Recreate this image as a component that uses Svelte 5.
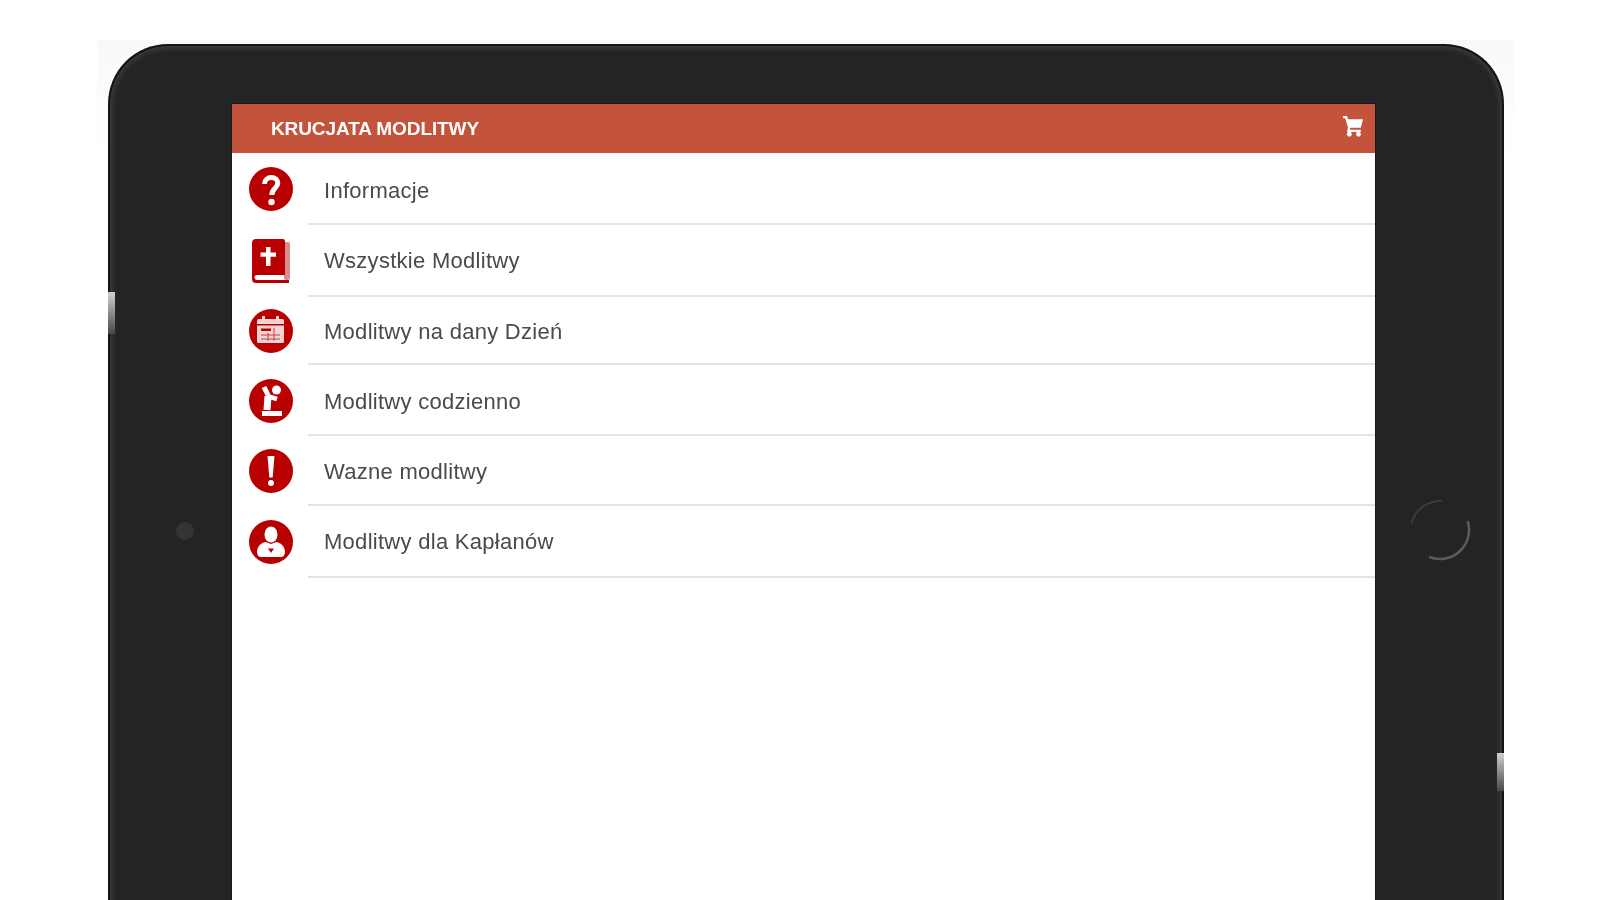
<script>
  const rows = [
    { label: 'Informacje', icon: 'question', height: 72, pad: 6 },
    { label: 'Wszystkie Modlitwy', icon: 'book', height: 72, pad: 1 },
    { label: 'Modlitwy na dany Dzień', icon: 'calendar', height: 68, pad: 3 },
    { label: 'Modlitwy codzienno', icon: 'pray', height: 71, pad: 4 },
    { label: 'Wazne modlitwy', icon: 'alert', height: 70, pad: 4 },
    { label: 'Modlitwy dla Kapłanów', icon: 'priest', height: 72, pad: 2 },
  ];
</script>

<div class="photo">
  <div class="tablet">
    <span class="side-key left"></span>
    <span class="side-key right"></span>

    <div class="bezel-left">
      <span class="camera"></span>
    </div>

    <main class="screen">
      <header class="app-bar">
        <span class="app-title">KRUCJATA MODLITWY</span>
        <svg class="cart" viewBox="0 0 24 24" fill="#fff">
          <path d="M1 1h4.500l1.200 3.500H23l-2.500 9.500H9l-.5 2h12v2.500H5.500l1-5L3.500 3.500H1z"></path>
          <circle cx="8" cy="21" r="2.600"></circle>
          <circle cx="18" cy="21" r="2.600"></circle>
        </svg>
      </header>

      <ul class="menu">
        {#each rows as row}
          <li class="row" style="height: {row.height}px">
            <div class="icon-cell">
              <svg class="icon" viewBox="0 0 44 44">
                {#if row.icon === 'question'}
                  <circle cx="22" cy="22" r="22" fill="#b80000"></circle>
                  <path d="M15.500 17c0-4 3-6.500 6.800-6.500 3.800 0 6.500 2.300 6.500 5.600 0 5-6 5-6 12" fill="none" stroke="#fff" stroke-width="5"></path>
                  <circle cx="22.500" cy="35" r="3.200" fill="#fff"></circle>
                {:else if row.icon === 'book'}
                  <rect x="35" y="3" width="6" height="38" rx="2" fill="#d68f8f"></rect>
                  <path d="M3 4a4 4 0 0 1 4-4h27a2 2 0 0 1 2 2v34H8a2.500 2.500 0 0 0 0 5h32v3H7a4 4 0 0 1-4-4z" fill="#b80000"></path>
                  <path d="M17 8h4.500v5.500H27v4.200h-5.500V27H17v-9.300h-5.500v-4.200H17z" fill="#fff"></path>
                {:else if row.icon === 'calendar'}
                  <circle cx="22" cy="22" r="22" fill="#b80000"></circle>
                  <rect x="8" y="10" width="27" height="24" rx="1.500" fill="#f3d3d3"></rect>
                  <rect x="13" y="7" width="3" height="7" fill="#f3d3d3"></rect>
                  <rect x="27" y="7" width="3" height="7" fill="#f3d3d3"></rect>
                  <rect x="8" y="15" width="27" height="1.500" fill="#b80000"></rect>
                  <rect x="12" y="19.500" width="10" height="2.500" fill="#b80000"></rect>
                  <path d="M12 26h19M12 30h19M19 24v8M25 19v13" stroke="#c84040" stroke-width="1" fill="none"></path>
                {:else if row.icon === 'pray'}
                  <circle cx="22" cy="22" r="22" fill="#b80000"></circle>
                  <circle cx="27.500" cy="11" r="4.500" fill="#fff"></circle>
                  <path d="M15 8l4 8" fill="none" stroke="#fff" stroke-width="5"></path>
                  <path d="M18 17l10 3" fill="none" stroke="#fff" stroke-width="4.500"></path>
                  <path d="M19 17l-1 14" fill="none" stroke="#fff" stroke-width="7"></path>
                  <path d="M13 34.500h20" fill="none" stroke="#fff" stroke-width="5"></path>
                {:else if row.icon === 'alert'}
                  <circle cx="22" cy="22" r="22" fill="#b80000"></circle>
                  <path d="M18.500 7h7l-1.800 21.500h-3.400z" fill="#fff"></path>
                  <circle cx="22" cy="34" r="3" fill="#fff"></circle>
                {:else}
                  <circle cx="22" cy="22" r="22" fill="#b80000"></circle>
                  <ellipse cx="22" cy="14.500" rx="6.500" ry="8" fill="#fff"></ellipse>
                  <path d="M8 32c0-5 3.500-9 8.500-10l5.500 2 5.500-2c5 1 8.500 5 8.500 10 0 3-2 5-4 5H12c-2 0-4-2-4-5z" fill="#fff"></path>
                  <path d="M19 28.500h6L22 33z" fill="#b80000"></path>
                {/if}
              </svg>
            </div>
            <div class="row-body" style="padding-top: {row.pad}px">
              <span class="row-label">{row.label}</span>
            </div>
          </li>
        {/each}
      </ul>
    </main>

    <div class="bezel-right">
      <svg class="home-button" viewBox="0 0 62 62" fill="none">
        <path d="M2.700 24.500A29 29 0 0 1 32.500 2" stroke="#3c3c3c" stroke-width="2"></path>
        <path d="M58.600 22A29 29 0 0 1 20.100 57.900" stroke="#5c5c5c" stroke-width="2.500"></path>
      </svg>
    </div>
  </div>
</div>

<style>
  :global(body) {
    background: #fff;
    overflow: hidden;
  }

  .photo {
    width: 1417px;
    height: 860px;
    margin: 40px 0 0 97px;
    padding: 4px 10px 0 11px;
    box-sizing: border-box;
    background: linear-gradient(#f9f9f9, #fff 120px);
  }

  .tablet {
    position: relative;
    display: flex;
    height: 900px;
    box-sizing: border-box;
    padding-top: 58px;
    background: #242424;
    border: 2px solid #141414;
    border-bottom: none;
    border-radius: 60px 60px 0 0;
    box-shadow: inset 0 0 5px 3px #3a3a3a;
    filter: blur(0.7px);
  }

  .side-key {
    position: absolute;
    width: 7px;
    background: linear-gradient(#d0d0d0, #484848);
  }

  .side-key.left {
    left: -2px;
    top: 246px;
    height: 42px;
  }

  .side-key.right {
    right: -2px;
    top: 707px;
    height: 38px;
  }

  .bezel-left {
    width: 122px;
    flex: none;
    display: flex;
    justify-content: center;
    padding-top: 418px;
    box-sizing: border-box;
  }

  .camera {
    width: 18px;
    height: 18px;
    border-radius: 50%;
    background: #343437;
    margin-left: 27px;
  }

  .bezel-right {
    width: 126px;
    flex: none;
    display: flex;
    justify-content: center;
    align-items: flex-start;
    padding-top: 395px;
    box-sizing: border-box;
  }

  .home-button {
    width: 62px;
    height: 62px;
    margin-left: 3px;
  }

  .screen {
    width: 1143px;
    flex: none;
    background: #fff;
    outline: 1px solid #161a1a;
    font-family: "Liberation Sans", Arial, sans-serif;
  }

  .app-bar {
    display: flex;
    align-items: center;
    justify-content: space-between;
    height: 49px;
    padding: 0 11px 0 39px;
    background: #c4533b;
  }

  .app-title {
    color: #fff;
    font-size: 19px;
    font-weight: 700;
    letter-spacing: -0.1px;
  }

  .cart {
    width: 22px;
    height: 22px;
    margin-top: -5px;
  }

  .menu {
    list-style: none;
    margin: 0;
    padding: 0;
  }

  .row {
    display: flex;
    box-sizing: border-box;
  }

  .icon-cell {
    width: 76px;
    flex: none;
    display: flex;
    align-items: center;
    justify-content: center;
    box-sizing: border-box;
    padding-left: 1px;
  }

  .icon {
    width: 44px;
    height: 44px;
  }

  .row-body {
    flex: 1;
    display: flex;
    align-items: center;
    padding-left: 16px;
    border-bottom: 2px solid #e4e4e4;
  }

  .row-label {
    color: #4a4a4a;
    font-size: 22px;
    letter-spacing: 0.28px;
    filter: blur(0.3px);
  }
</style>
